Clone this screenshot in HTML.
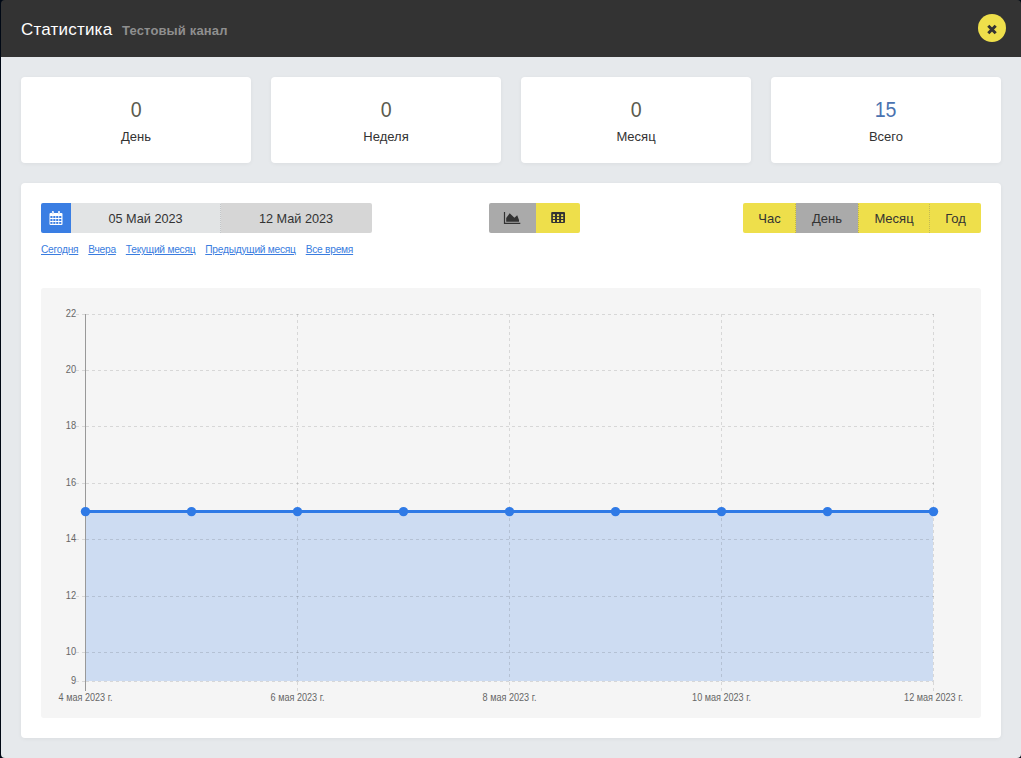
<!DOCTYPE html>
<html><head><meta charset="utf-8">
<style>
*{box-sizing:border-box;margin:0;padding:0}
html,body{width:1021px;height:758px;overflow:hidden;background:#000814;font-family:"Liberation Sans",sans-serif}
.abs{position:absolute}
#modal{position:absolute;left:1px;top:0;width:1020px;height:758px;background:linear-gradient(#333333 0 57px,#e6e9ec 57px);border-radius:4px;overflow:hidden}
#hdr{position:absolute;left:1px;top:0;width:1024px;height:57px;background:#333333;border-radius:4px 4px 0 0}
#title{position:absolute;left:21px;top:20px;font-size:17px;letter-spacing:0.2px;color:#fff;white-space:nowrap;line-height:20px}
#sub{position:absolute;left:122px;top:23px;font-size:13px;letter-spacing:0.15px;font-weight:bold;color:#8f8f8f;white-space:nowrap;line-height:16px}
#close{position:absolute;left:978px;top:14px;width:28px;height:28px;border-radius:50%;background:#eedf4b}
#close svg{position:absolute;left:0;top:0}
.card{position:absolute;top:77px;width:230px;height:86px;background:#fff;border-radius:4px;box-shadow:0 1px 4px rgba(0,0,0,0.05)}
.card .num{position:absolute;left:0;right:0;top:19px;text-align:center;font-size:22.5px;line-height:27px;color:#5b5b4f}.card .num span{display:inline-block;transform:scaleX(0.87)}
.card .lbl{position:absolute;left:0;right:0;top:52px;text-align:center;font-size:13px;line-height:16px;color:#333}
#panel{position:absolute;left:21px;top:183px;width:980px;height:555px;background:#fff;border-radius:4px;box-shadow:0 1px 4px rgba(0,0,0,0.05)}
.btn{position:absolute;top:203px;height:30px;line-height:32px;text-align:center;font-size:13px;color:#333}
.dt{font-size:12.7px}
.yl{background:#eedf4b}
.gr{background:#aaaaaa}
#links{position:absolute;left:41px;top:243px;font-size:10.2px;letter-spacing:-0.25px;line-height:14px;white-space:nowrap}
#links a{color:#3a7de0;text-decoration:underline;margin-right:10px}
svg text{font-family:"Liberation Sans",sans-serif;fill:#666}
svg text.yl{font-size:10px}
svg text.xl{font-size:10px}
</style></head><body>
<div id="modal"></div>
<div id="title">Статистика</div>
<div id="sub">Тестовый канал</div>
<div id="close"><svg width="28" height="28" viewBox="0 0 28 28"><path d="M10.3 11.8 L17.7 19.2 M17.7 11.8 L10.3 19.2" stroke="#333" stroke-width="3" /></svg></div>
<div class="card" style="left:21px"><div class="num"><span>0</span></div><div class="lbl">День</div></div>
<div class="card" style="left:271px"><div class="num"><span>0</span></div><div class="lbl">Неделя</div></div>
<div class="card" style="left:521px"><div class="num"><span>0</span></div><div class="lbl">Месяц</div></div>
<div class="card" style="left:771px"><div class="num" style="color:#4a72b0"><span>15</span></div><div class="lbl">Всего</div></div>
<div id="panel"></div>
<div class="btn" style="left:41px;width:30px;background:#3a7ee3;border-radius:2px 0 0 2px"></div>
<svg class="abs" style="left:46px;top:208px" width="20" height="20" viewBox="0 0 20 20"><rect x="3.5" y="5" width="13" height="12" rx="1" fill="#fff"/><g fill="#3a7ee3"><rect x="4.4" y="8" width="2.1" height="2"/><rect x="7.3" y="8" width="2.1" height="2"/><rect x="10.2" y="8" width="2.1" height="2"/><rect x="13.2" y="8" width="2.1" height="2"/><rect x="4.4" y="11" width="2.1" height="2"/><rect x="7.3" y="11" width="2.1" height="2"/><rect x="10.2" y="11" width="2.1" height="2"/><rect x="13.2" y="11" width="2.1" height="2"/><rect x="4.4" y="14" width="2.1" height="1.9"/><rect x="7.3" y="14" width="2.1" height="1.9"/><rect x="10.2" y="14" width="2.1" height="1.9"/><rect x="13.2" y="14" width="2.1" height="1.9"/></g><rect x="5.9" y="3" width="2" height="3.8" rx="1" fill="#fff"/><rect x="12" y="3" width="2" height="3.8" rx="1" fill="#fff"/><rect x="6.5" y="4" width="0.8" height="2.2" fill="#a9c6f3"/><rect x="12.6" y="4" width="0.8" height="2.2" fill="#a9c6f3"/></svg>
<div class="btn dt" style="left:71px;width:149px;background:#e2e4e5">05 Май 2023</div>
<div class="btn dt" style="left:220px;width:152px;background:#d6d6d6;border-radius:0 2px 2px 0">12 Май 2023</div>
<div class="abs" style="left:220px;top:203px;width:1px;height:30px;background:repeating-linear-gradient(#e1e4e5 0 1px,#c4c6c8 1px 2px)"></div>
<div id="links"><a>Сегодня</a><a>Вчера</a><a>Текущий месяц</a><a>Предыдущий месяц</a><a>Все время</a></div>
<div class="btn gr" style="left:489px;width:47px;border-radius:2px 0 0 2px"></div>
<div class="btn yl" style="left:536px;width:44px;border-radius:0 2px 2px 0"></div>
<svg class="abs" style="left:500px;top:208px" width="24" height="20" viewBox="0 0 24 20"><path d="M4.5 4 V15.4 H20.3" stroke="#333" stroke-width="1.2" fill="none"/><path d="M6.2 13.8 V10 L9.7 5.2 L14.4 9.7 L17.2 7.2 L19 12 V13.8 Z" fill="#333"/></svg>
<svg class="abs" style="left:548px;top:208px" width="20" height="18" viewBox="0 0 20 18"><rect x="3.2" y="4" width="13.8" height="10.9" rx="1" fill="#333"/><g fill="#eedf4b"><rect x="4.9" y="6.2" width="2.1" height="1.9"/><rect x="9" y="6.2" width="2.1" height="1.9"/><rect x="13.1" y="6.2" width="2.1" height="1.9"/><rect x="4.9" y="9.1" width="2.1" height="1.9"/><rect x="9" y="9.1" width="2.1" height="1.9"/><rect x="13.1" y="9.1" width="2.1" height="1.9"/><rect x="4.9" y="12" width="2.1" height="2"/><rect x="9" y="12" width="2.1" height="2"/><rect x="13.1" y="12" width="2.1" height="2"/></g></svg>
<div class="btn yl" style="left:743px;width:53px;border-radius:2px 0 0 2px">Час</div>
<div class="btn gr" style="left:796px;width:62px">День</div>
<div class="btn yl" style="left:858px;width:72px">Месяц</div>
<div class="btn yl" style="left:930px;width:51px;border-radius:0 2px 2px 0">Год</div>
<div class="abs" style="left:929px;top:203px;width:1px;height:30px;background:repeating-linear-gradient(#eedf4b 0 1px,#c5ba52 1px 2px)"></div>
<div class="abs" style="left:795px;top:203px;width:1px;height:30px;background:repeating-linear-gradient(#eedf4b 0 1px,#c2b546 1px 2px)"></div>
<div class="abs" style="left:858px;top:203px;width:1px;height:30px;background:repeating-linear-gradient(#eedf4b 0 1px,#c2b546 1px 2px)"></div>
<svg class="abs" style="left:41px;top:288px" width="940" height="430" viewBox="41 288 940 430">
<rect x="41" y="288" width="940" height="430" rx="3" fill="#f5f5f5"/>
<rect x="86" y="511.62" width="847" height="169.38" fill="#cddcf2"/>
<line x1="76" y1="314.5" x2="85" y2="314.5" stroke="rgba(0,0,0,0.12)" stroke-dasharray="3,3"/>
<line x1="86" y1="314.5" x2="934" y2="314.5" stroke="rgba(0,0,0,0.12)" stroke-dasharray="3,3"/>
<text transform="translate(76.2,317.3) scale(0.93,1)" text-anchor="end" class="yl">22</text>
<line x1="76" y1="370.5" x2="85" y2="370.5" stroke="rgba(0,0,0,0.12)" stroke-dasharray="3,3"/>
<line x1="86" y1="370.5" x2="934" y2="370.5" stroke="rgba(0,0,0,0.12)" stroke-dasharray="3,3"/>
<text transform="translate(76.2,373.3) scale(0.93,1)" text-anchor="end" class="yl">20</text>
<line x1="76" y1="426.5" x2="85" y2="426.5" stroke="rgba(0,0,0,0.12)" stroke-dasharray="3,3"/>
<line x1="86" y1="426.5" x2="934" y2="426.5" stroke="rgba(0,0,0,0.12)" stroke-dasharray="3,3"/>
<text transform="translate(76.2,429.3) scale(0.93,1)" text-anchor="end" class="yl">18</text>
<line x1="76" y1="483.5" x2="85" y2="483.5" stroke="rgba(0,0,0,0.12)" stroke-dasharray="3,3"/>
<line x1="86" y1="483.5" x2="934" y2="483.5" stroke="rgba(0,0,0,0.12)" stroke-dasharray="3,3"/>
<text transform="translate(76.2,486.3) scale(0.93,1)" text-anchor="end" class="yl">16</text>
<line x1="76" y1="539.5" x2="85" y2="539.5" stroke="rgba(0,0,0,0.12)" stroke-dasharray="3,3"/>
<line x1="86" y1="539.5" x2="934" y2="539.5" stroke="rgba(0,0,0,0.12)" stroke-dasharray="3,3"/>
<text transform="translate(76.2,542.3) scale(0.93,1)" text-anchor="end" class="yl">14</text>
<line x1="76" y1="596.5" x2="85" y2="596.5" stroke="rgba(0,0,0,0.12)" stroke-dasharray="3,3"/>
<line x1="86" y1="596.5" x2="934" y2="596.5" stroke="rgba(0,0,0,0.12)" stroke-dasharray="3,3"/>
<text transform="translate(76.2,599.3) scale(0.93,1)" text-anchor="end" class="yl">12</text>
<line x1="76" y1="652.5" x2="85" y2="652.5" stroke="rgba(0,0,0,0.12)" stroke-dasharray="3,3"/>
<line x1="86" y1="652.5" x2="934" y2="652.5" stroke="rgba(0,0,0,0.12)" stroke-dasharray="3,3"/>
<text transform="translate(76.2,655.3) scale(0.93,1)" text-anchor="end" class="yl">10</text>
<line x1="76" y1="681.5" x2="85" y2="681.5" stroke="rgba(0,0,0,0.12)" stroke-dasharray="3,3"/>
<line x1="86" y1="681.5" x2="934" y2="681.5" stroke="rgba(0,0,0,0.12)" stroke-dasharray="3,3"/>
<text transform="translate(76.2,684.3) scale(0.93,1)" text-anchor="end" class="yl">9</text>
<line x1="297.5" y1="314" x2="297.5" y2="681" stroke="rgba(0,0,0,0.12)" stroke-dasharray="3,3"/>
<line x1="297.5" y1="682" x2="297.5" y2="691" stroke="rgba(0,0,0,0.12)" stroke-dasharray="3,3"/>
<line x1="509.5" y1="314" x2="509.5" y2="681" stroke="rgba(0,0,0,0.12)" stroke-dasharray="3,3"/>
<line x1="509.5" y1="682" x2="509.5" y2="691" stroke="rgba(0,0,0,0.12)" stroke-dasharray="3,3"/>
<line x1="721.5" y1="314" x2="721.5" y2="681" stroke="rgba(0,0,0,0.12)" stroke-dasharray="3,3"/>
<line x1="721.5" y1="682" x2="721.5" y2="691" stroke="rgba(0,0,0,0.12)" stroke-dasharray="3,3"/>
<line x1="933.5" y1="314" x2="933.5" y2="681" stroke="rgba(0,0,0,0.12)" stroke-dasharray="3,3"/>
<line x1="933.5" y1="682" x2="933.5" y2="691" stroke="rgba(0,0,0,0.12)" stroke-dasharray="3,3"/>
<line x1="85.5" y1="314" x2="85.5" y2="691" stroke="#999"/>
<text transform="translate(85.5,700.7) scale(0.91,1)" text-anchor="middle" class="xl">4 мая 2023 г.</text>
<text transform="translate(297.5,700.7) scale(0.91,1)" text-anchor="middle" class="xl">6 мая 2023 г.</text>
<text transform="translate(509.5,700.7) scale(0.91,1)" text-anchor="middle" class="xl">8 мая 2023 г.</text>
<text transform="translate(721.5,700.7) scale(0.91,1)" text-anchor="middle" class="xl">10 мая 2023 г.</text>
<text transform="translate(933.5,700.7) scale(0.91,1)" text-anchor="middle" class="xl">12 мая 2023 г.</text>
<line x1="85" y1="511.62" x2="933" y2="511.62" stroke="#2f7ae6" stroke-width="3"/>
<circle cx="85.5" cy="511.62" r="4.7" fill="#2f7ae6"/>
<circle cx="191.5" cy="511.62" r="4.7" fill="#2f7ae6"/>
<circle cx="297.5" cy="511.62" r="4.7" fill="#2f7ae6"/>
<circle cx="403.5" cy="511.62" r="4.7" fill="#2f7ae6"/>
<circle cx="509.5" cy="511.62" r="4.7" fill="#2f7ae6"/>
<circle cx="615.5" cy="511.62" r="4.7" fill="#2f7ae6"/>
<circle cx="721.5" cy="511.62" r="4.7" fill="#2f7ae6"/>
<circle cx="827.5" cy="511.62" r="4.7" fill="#2f7ae6"/>
<circle cx="933.5" cy="511.62" r="4.7" fill="#2f7ae6"/>
</svg>
</body></html>
